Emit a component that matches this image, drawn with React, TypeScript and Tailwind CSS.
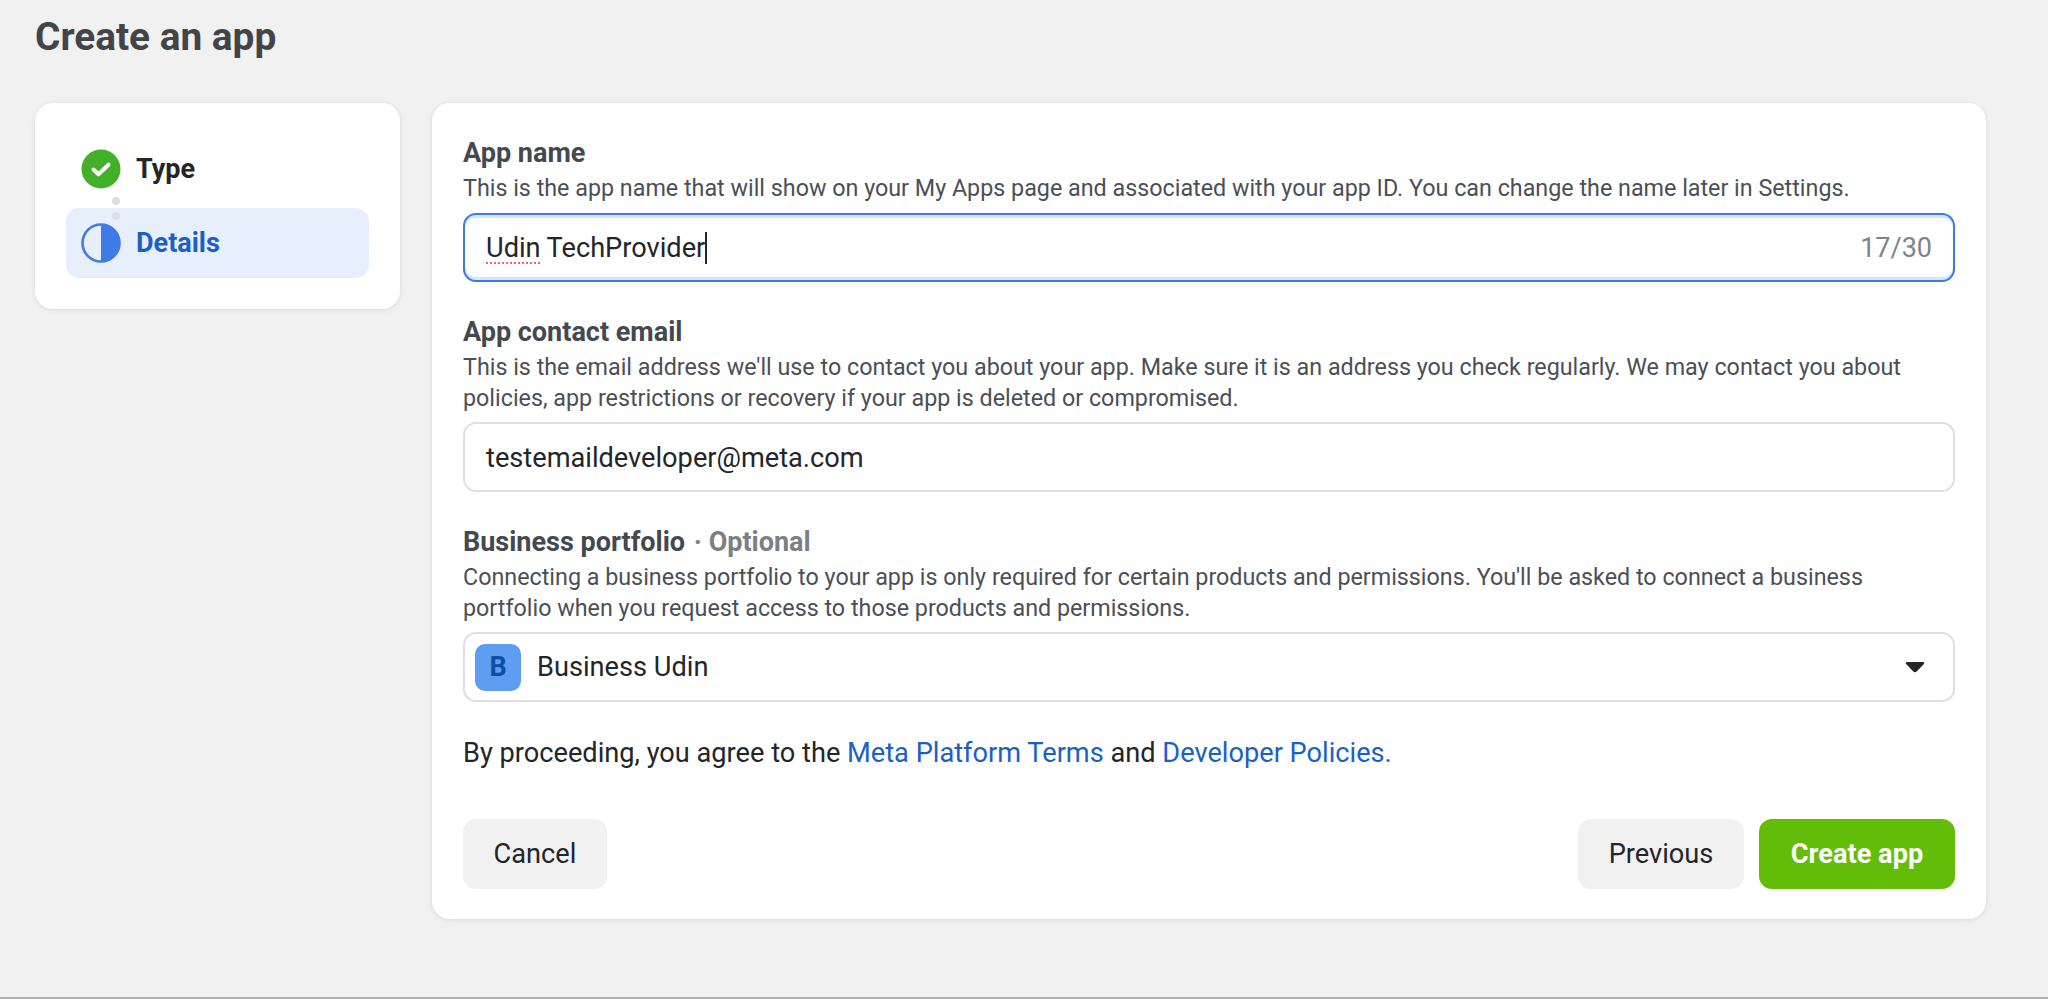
const fieldHead = 'text-[27px] leading-[36px] font-bold text-[#444950]';
const fieldHelp = 'mt-[2px] text-[23.3px] leading-[31px] text-[#4b4f56]';
const inputText = 'text-[27.2px] text-[#232528]';

const StepDot = ({ className }: { className: string }) => (
  <div className={`absolute left-[46px] h-2 w-2 rounded-full bg-[#dadde1] ${className}`} />
);

const Sidebar = () => (
  <div className="flex h-[206px] w-[365px] shrink-0 flex-col rounded-[18px] bg-white px-[31px] pt-[40px] shadow-[0_1px_5px_rgba(0,0,0,0.1)]">
    <div className="relative">
      <div className="flex h-[52px] items-center gap-[15px] pl-[15px]">
        <svg width="40" height="40" viewBox="0 0 40 40" className="shrink-0">
          <circle cx="20" cy="20" r="19.5" fill="#42b029" />
          <path d="M12.5 20.5l5 4.8 10-9.600" fill="none" stroke="#fff" strokeWidth="4" strokeLinecap="round" strokeLinejoin="round" />
        </svg>
        <span className="text-[27px] font-bold text-[#232528]">Type</span>
      </div>
      <div className="mt-[13px] flex h-[70px] items-center gap-[15px] rounded-[13px] bg-[#e8effc] pl-[15px]">
        <svg width="40" height="40" viewBox="0 0 40 40" className="shrink-0">
          <circle cx="20" cy="20" r="18.500" fill="none" stroke="#3f7be6" strokeWidth="2.600" />
          <path d="M20 1a19 19 0 0 1 0 38z" fill="#3f7be6" />
        </svg>
        <span className="text-[27px] font-bold text-[#1a60c7]">Details</span>
      </div>
      <StepDot className="top-[54px]" />
      <StepDot className="top-[69px]" />
    </div>
  </div>
);

const App = () => {
  return (
    <div className="flex h-[999px] flex-col border-b-2 border-[#b0b0b0] bg-[#f1f1f1] px-[35px] font-['Roboto',sans-serif]">
      <h1 className="mt-[14px] text-[38.800px] leading-[46px] font-bold text-[#414448]">Create an app</h1>
      <div className="mt-[43px] flex gap-[32px]">
        <Sidebar />
        <div className="flex h-[816px] w-[1554px] flex-col rounded-[18px] bg-white px-[31px] shadow-[0_1px_5px_rgba(0,0,0,0.1)]">
          <div className={`mt-[32px] ${fieldHead}`}>App name</div>
          <p className={fieldHelp}>This is the app name that will show on your My Apps page and associated with your app ID. You can change the name later in Settings.</p>
          <div className="mt-[9px] flex h-[69px] items-center justify-between rounded-[13px] border-[2.5px] border-[#3a7ce2] px-[21px] pt-[2px] shadow-[inset_0_3px_0_#d5e5fb,inset_0_-3px_0_#d5e5fb]">
            <div className={`flex items-center ${inputText}`}>
              <span className="underline decoration-[#f0637f] decoration-dotted decoration-2 underline-offset-[5px]">Udin</span>
              <span className="ml-[6px]">TechProvider</span>
              <span className="h-[32px] w-[2px] bg-[#232528]" />
            </div>
            <span className="text-[27px] text-[#808489]">17/30</span>
          </div>

          <div className={`mt-[32px] ${fieldHead}`}>App contact email</div>
          <p className={fieldHelp}>This is the email address we'll use to contact you about your app. Make sure it is an address you check regularly. We may contact you about policies, app restrictions or recovery if your app is deleted or compromised.</p>
          <div className={`mt-[8px] flex h-[70px] items-center rounded-[13px] border-2 border-[#dddfe2] px-[21px] pt-[2px] ${inputText}`}>
            testemaildeveloper@meta.com
          </div>

          <div className={`mt-[32px] ${fieldHead}`}>
            Business portfolio <span className="ml-[2px] text-[#7c7f84]">· Optional</span>
          </div>
          <p className={fieldHelp}>Connecting a business portfolio to your app is only required for certain products and permissions. You'll be asked to connect a business portfolio when you request access to those products and permissions.</p>
          <div className="mt-[8px] flex h-[70px] items-center justify-between rounded-[13px] border-2 border-[#dddfe2] pr-[28px] pl-[10px]">
            <div className="flex items-center gap-[16px]">
              <div className="flex h-[47px] w-[46px] items-center justify-center rounded-[10px] bg-[#5e9df0] text-[27px] font-bold text-[#0f4da6]">B</div>
              <span className={inputText}>Business Udin</span>
            </div>
            <svg width="20" height="12" viewBox="0 0 20 12">
              <path d="M2 1h16c1.200 0 1.700 1.200.9 2.100l-7.200 7.400c-.9.9-2.500.9-3.400 0L1.100 3.100C.3 2.200.8 1 2 1z" fill="#232528" />
            </svg>
          </div>

          <p className="mt-[33px] text-[27.2px] leading-[36px] text-[#232528]">
            By proceeding, you agree to the <span className="text-[#1a60c7]">Meta Platform Terms</span> and <span className="text-[#1a60c7]">Developer Policies.</span>
          </p>

          <div className="mt-[48px] flex justify-between">
            <button className="h-[70px] w-[144px] rounded-[13px] bg-[#f1f1f1] text-[27.2px] text-[#232528]">Cancel</button>
            <div className="flex gap-[15px]">
              <button className="h-[70px] w-[166px] rounded-[13px] bg-[#f1f1f1] text-[27.2px] text-[#232528]">Previous</button>
              <button className="h-[70px] w-[196px] rounded-[13px] bg-[#63bc08] text-[27.2px] font-bold text-white">Create app</button>
            </div>
          </div>
        </div>
      </div>
    </div>
  );
};

export default App;
